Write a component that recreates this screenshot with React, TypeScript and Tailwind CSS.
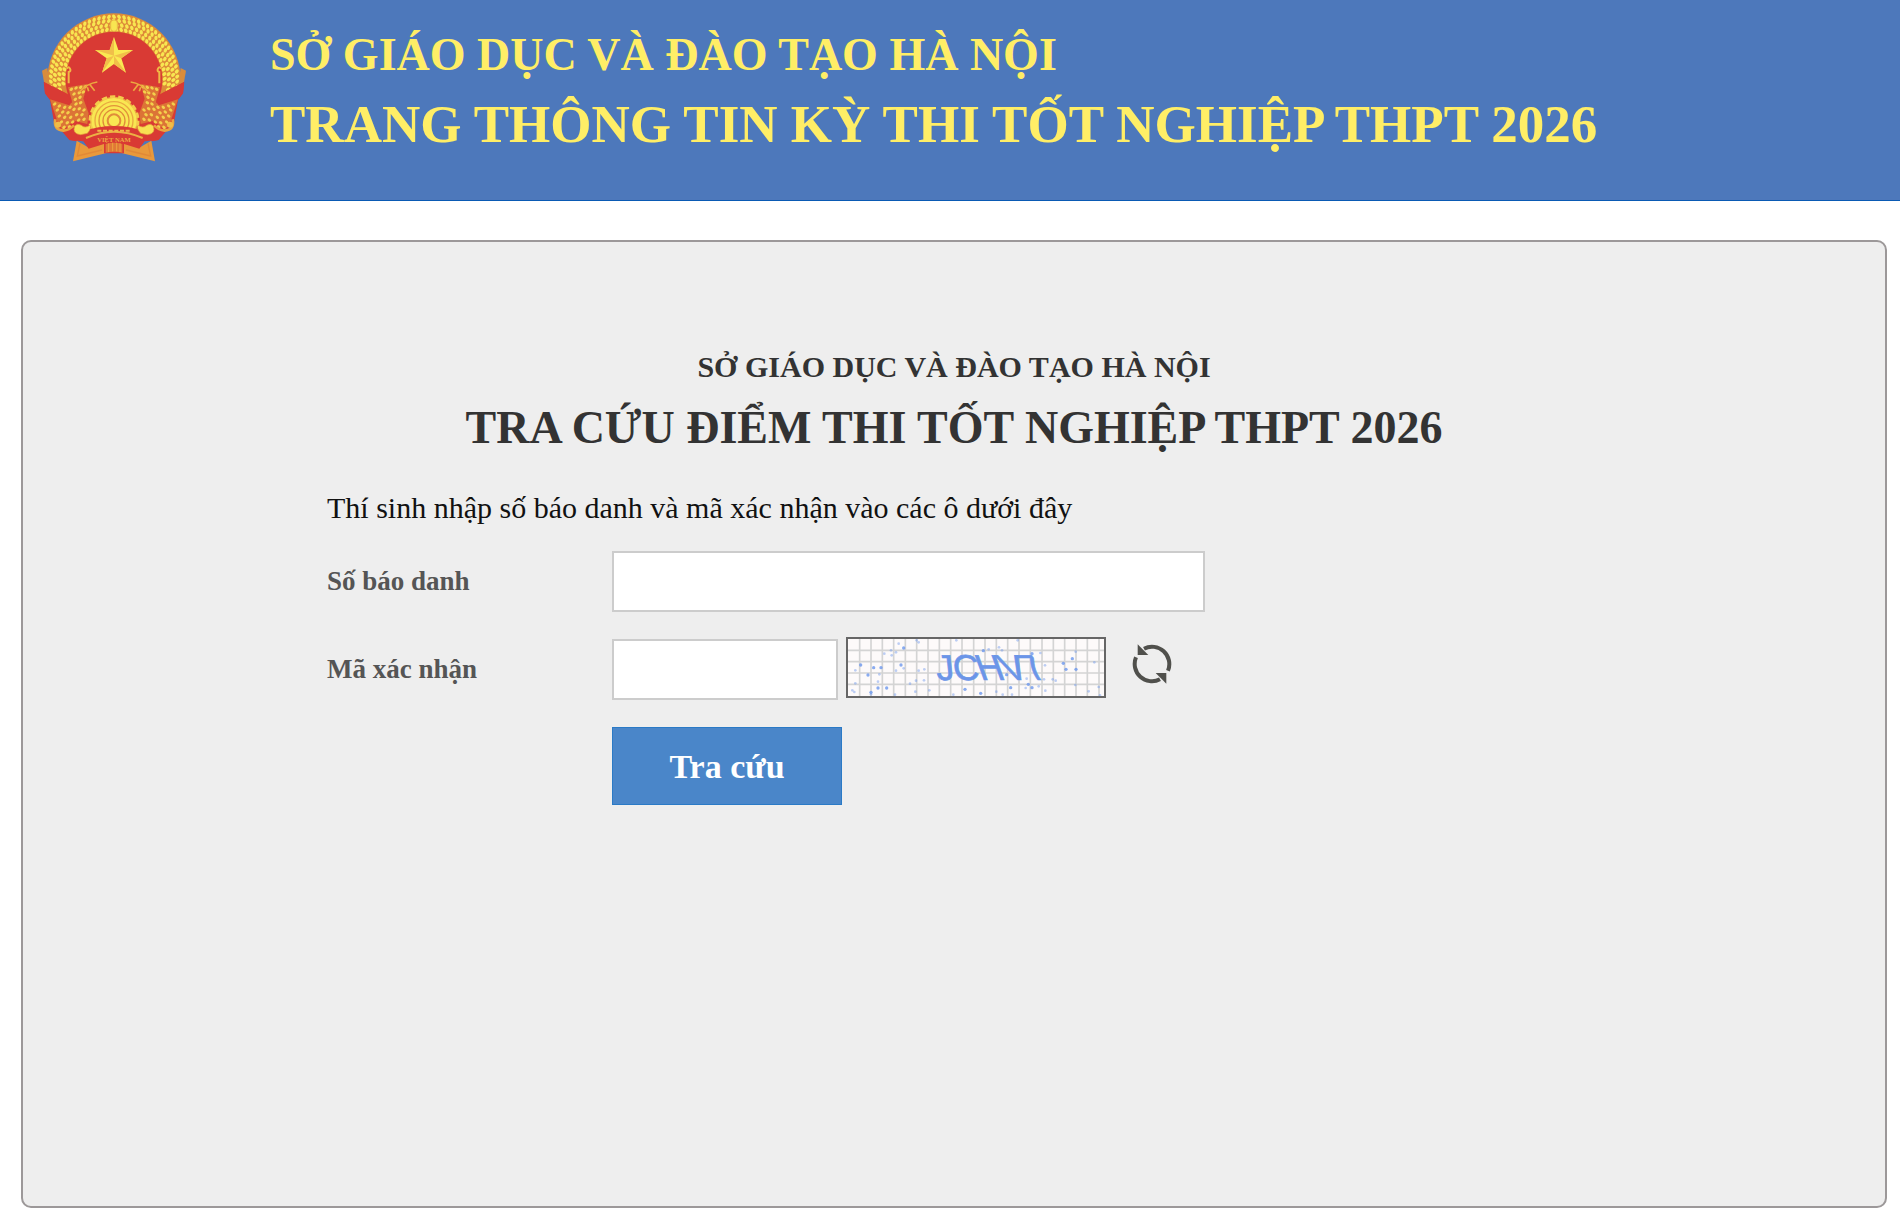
import { useState } from 'react';

type Point = { x: number; y: number; a: number };

function ring(radius: number, count: number, from: number, to: number): Point[] {
  return Array.from({ length: count }, (_, i) => {
    const a = from + ((to - from) * i) / (count - 1);
    const t = (a * Math.PI) / 180;
    return { x: 342 + radius * Math.sin(t), y: 240 - radius * Math.cos(t), a };
  });
}

const GRAINS: Point[] = [
  ...ring(152, 36, -94, 94),
  ...ring(165, 38, -100, 100),
  ...ring(178, 41, -100, 100),
  ...ring(190, 43, -96, 96),
];

const SHEAF: [number, number][] = [
  [214, 268], [228, 264], [242, 262], [256, 260], [222, 282], [238, 278], [250, 276],
  [226, 298], [240, 292], [164, 312], [178, 318], [194, 322], [210, 322], [228, 312],
  [242, 308], [172, 330], [188, 336], [204, 338], [222, 328], [238, 326], [252, 330],
  [178, 348], [194, 352], [212, 352], [230, 344], [246, 344], [184, 366], [202, 368],
  [218, 366], [236, 360], [252, 358], [192, 382], [208, 380],
];

function EmblemSide() {
  return (
    <g>
      <path d="M126 212 L142 204 L150 262 L132 246 Z" fill="#d98c3c" />
      <path d="M132 246 L214 288 L262 290 L262 396 L228 424 L208 420 L162 366 L150 300 L135 280 Z" fill="#d93a34" />
      <path d="M150 298 L208 316 L216 304 L204 262 L262 252 L250 296 L266 340 L262 372 L222 362 L190 390 L176 376 Z" fill="#dc7436" />
      <path d="M131 246 L198 280 L216 308 L204 313 L146 294 L135 280 Z" fill="#d93a34" />
      {SHEAF.map(([x, y]) => (
        <ellipse key={`${x}-${y}`} cx={x} cy={y} rx="6" ry="4.2" fill="#f3d04c" transform={`rotate(-40 ${x} ${y})`} />
      ))}
      <path d="M292 246 Q262 250 238 276 M270 254 L284 272 M262 262 L266 274" stroke="#ecaa40" strokeWidth="5" fill="none" />
      <path d="M200 206 q6 -8 10 0 q4 8 -4 10 l0 34" stroke="#f0b945" strokeWidth="6" fill="none" />
      <path d="M166 358 Q160 390 190 392 Q208 390 222 376" stroke="#eba53f" strokeWidth="8" fill="none" />
      <circle cx="174" cy="374" r="9" fill="#f1bd48" />
      <path d="M230 422 L219 484 L317 460 L317 428 L264 442 Z" fill="#e9993b" />
      <path d="M240 430 L232 468 L306 450" stroke="#dc7e35" strokeWidth="4" fill="none" opacity=".6" />
    </g>
  );
}

function Curl() {
  return (
    <path
      d="M224 378 Q216 402 242 404 L262 400 Q276 384 270 376 Q254 386 244 376 Q232 368 224 378Z"
      fill="#f8e152"
      stroke="#e39a3a"
      strokeWidth="2"
    />
  );
}

function Emblem() {
  return (
    <svg viewBox="126 39 432 447" className="h-[149px] w-36 shrink-0" role="img" aria-label="Quốc huy Việt Nam">
      <circle cx="342" cy="240" r="200" fill="#dd8a38" />
      {GRAINS.map((g) => (
        <ellipse
          key={`${g.x}-${g.y}`}
          cx={g.x}
          cy={g.y}
          rx="5"
          ry="7"
          fill="#f8e651"
          transform={`rotate(${g.a + (g.a < 0 ? 38 : -38)} ${g.x} ${g.y})`}
        />
      ))}
      <circle cx="342" cy="240" r="145" fill="#d93a34" />
      <rect x="332" y="60" width="20" height="34" rx="9" fill="#f8e651" stroke="#e9b544" strokeWidth="3" />
      <path d="M230 300 H454 V410 H230 Z" fill="#d93a34" />
      <EmblemSide />
      <g transform="matrix(-1 0 0 1 684 0)">
        <EmblemSide />
      </g>
      <path d="M342 111 L355 150 L399 150 L364 175 L378 218 L342 192 L306 218 L320 175 L285 150 L329 150 Z" fill="#fae952" />
      <path d="M342 111 L342 167 L329 150Z M399 150 L342 167 L364 175Z M378 218 L342 167 L342 192Z M306 218 L342 167 L320 175Z M285 150 L342 167 L329 150Z" fill="#f1bf49" />
      <circle cx="342" cy="362" r="72" fill="#e9a83f" stroke="#f3cb4b" strokeWidth="9" strokeDasharray="16 9" />
      <circle cx="342" cy="362" r="68" fill="#f9e752" />
      <circle cx="342" cy="362" r="57" fill="none" stroke="#e9aa40" strokeWidth="4" />
      <circle cx="342" cy="362" r="45" fill="none" stroke="#e2923a" strokeWidth="4" />
      <circle cx="342" cy="362" r="33" fill="none" stroke="#e08c3a" strokeWidth="4" />
      <circle cx="342" cy="362" r="19" fill="none" stroke="#e08c3a" strokeWidth="6" />
      <path d="M208 420 L250 394 Q342 362 434 394 L476 420 L434 424 L418 446 L372 432 L372 460 L312 460 L312 432 L266 446 L250 424 Z" fill="#d93a34" />
      <Curl />
      <g transform="matrix(-1 0 0 1 684 0)">
        <Curl />
      </g>
      <path d="M258 414 Q342 376 428 414" fill="none" stroke="#ecb044" strokeWidth="6" />
      <path d="M292 392 H392" stroke="#efbb46" strokeWidth="6" strokeDasharray="12 5" />
      <path d="M317 432 Q342 424 367 432 L367 458 Q342 452 317 458Z" fill="#e07836" />
      <path d="M326 430 V456 M338 428 V454 M350 428 V454 M360 430 V456" stroke="#eda23e" strokeWidth="3" />
      <text x="342" y="425" textAnchor="middle" fontSize="20" fontWeight="700" fill="#ecaa42" className="font-['Liberation_Serif',serif]">
        VIỆT NAM
      </text>
    </svg>
  );
}

const DOTS: [number, number, number][] = [
  [176, 41, 3], [191, 54, 4], [230, 31, 3], [236, 37, 3], [349, 31, 3], [533, 31, 3], [153, 61, 3], [168, 67, 3],
  [133, 71, 3], [155, 76, 3], [62, 105, 4], [46, 121, 3], [84, 135, 4], [101, 113, 4], [123, 113, 4], [118, 133, 3],
  [183, 105, 4], [191, 115, 3], [168, 122, 3], [236, 122, 3], [253, 118, 3], [228, 152, 3], [252, 151, 3], [210, 161, 3],
  [114, 155, 3], [46, 160, 3], [114, 174, 4], [140, 174, 4], [37, 181, 3], [43, 186, 3], [93, 187, 4], [93, 193, 3],
  [165, 194, 3], [226, 185, 3], [268, 181, 3], [340, 194, 3], [375, 178, 4], [422, 190, 4], [469, 185, 3], [488, 194, 3],
  [512, 173, 4], [516, 194, 3], [430, 62, 4], [446, 58, 3], [477, 52, 3], [486, 61, 3], [576, 71, 4], [601, 69, 3],
  [615, 106, 3], [500, 134, 4], [560, 146, 3], [565, 163, 4], [557, 174, 3], [576, 173, 4], [596, 169, 3], [612, 148, 3],
  [616, 182, 3], [638, 148, 3], [647, 152, 3], [697, 86, 4], [670, 100, 4], [678, 118, 4], [708, 118, 4], [707, 65, 3],
  [763, 97, 3], [706, 165, 3], [746, 184, 3], [776, 171, 3], [780, 196, 3],
];

const LETTERS: { char: string; x: number; skew: number }[] = [
  { char: 'J', x: 292, skew: 6 },
  { char: 'C', x: 343, skew: 6 },
  { char: 'H', x: 423, skew: 20 },
  { char: 'V', x: 502, skew: 28 },
  { char: '7', x: 574, skew: 36 },
];

function Captcha() {
  return (
    <svg viewBox="24 27 768 171" className="block size-full" role="img" aria-label="JCHV7">
      <path
        d="M59 27V198M93 27V198M127 27V198M161 27V198M196 27V198M230 27V198M264 27V198M298 27V198M332 27V198M366 27V198M401 27V198M435 27V198M469 27V198M503 27V198M537 27V198M571 27V198M606 27V198M640 27V198M674 27V198M708 27V198M742 27V198M777 27V198M24 61H792M24 95H792M24 129H792M24 163H792"
        stroke="#d4d4d4"
        strokeWidth="5"
      />
      {DOTS.map(([x, y, r]) => (
        <circle key={`${x}-${y}`} cx={x} cy={y} r={r + 1} fill="#6c97ee" opacity={r === 4 ? 0.8 : 0.45} />
      ))}
      <g fill="#6b95e8" stroke="#6b95e8" strokeWidth="2" fontSize="108" className="font-['Liberation_Sans',sans-serif]">
        {LETTERS.map((l) => (
          <text key={l.char} transform={`translate(${l.x} 150) skewX(${l.skew})`}>
            {l.char}
          </text>
        ))}
      </g>
    </svg>
  );
}

function RefreshIcon() {
  return (
    <svg viewBox="51 37 118 120" className="size-10" aria-hidden="true">
      <path d="M86 51 A52 52 0 0 1 158 117" fill="none" stroke="#50504c" strokeWidth="12" />
      <path d="M67 38 V70 H99 Z" fill="#50504c" />
      <path d="M134 143 A52 52 0 0 1 62 77" fill="none" stroke="#50504c" strokeWidth="12" />
      <path d="M153 156 V124 H121 Z" fill="#50504c" />
    </svg>
  );
}

export default function App() {
  const [candidate, setCandidate] = useState('');
  const [code, setCode] = useState('');

  return (
    <div className="bg-white pb-3 font-['Liberation_Serif','Times_New_Roman',serif] text-[#333]">
      <header className="flex items-start border-b border-[#0a5ab4] bg-[#4d78bb] pt-[13px] pr-6 pb-[38px] pl-[42px]">
        <Emblem />
        <div className="ml-[84px] pt-2 font-bold text-[#ffee66]">
          <p className="text-[46px] leading-[68px]">SỞ GIÁO DỤC VÀ ĐÀO TẠO HÀ NỘI</p>
          <p className="text-[53px] leading-[70px]">TRANG THÔNG TIN KỲ THI TỐT NGHIỆP THPT 2026</p>
        </div>
      </header>

      <main className="mt-[39px] mr-[13px] ml-[21px] min-h-[968px] rounded-[10px] border-2 border-[#9c9899] bg-[#eeeeee] px-8 pt-[98px]">
        <div className="text-center font-bold">
          <h2 className="text-[30px] leading-[54px]">SỞ GIÁO DỤC VÀ ĐÀO TẠO HÀ NỘI</h2>
          <h1 className="text-[46px] leading-[68px]">TRA CỨU ĐIỂM THI TỐT NGHIỆP THPT 2026</h1>
        </div>

        <form className="mx-auto mt-[19px] max-w-[1254px]" onSubmit={(e) => e.preventDefault()}>
          <p className="text-[30px] leading-[54px] text-[#111]">
            Thí sinh nhập số báo danh và mã xác nhận vào các ô dưới đây
          </p>

          <div className="mt-4 flex items-center">
            <label htmlFor="candidate" className="w-[285px] text-[27px] font-bold text-[#555]">
              Số báo danh
            </label>
            <input
              id="candidate"
              type="text"
              value={candidate}
              onChange={(e) => setCandidate(e.target.value)}
              className="h-[61px] w-[593px] border-2 border-[#ccc] bg-white px-3 text-[27px]"
            />
          </div>

          <div className="mt-[25px] flex items-center">
            <label htmlFor="code" className="w-[285px] text-[27px] font-bold text-[#555]">
              Mã xác nhận
            </label>
            <input
              id="code"
              type="text"
              value={code}
              onChange={(e) => setCode(e.target.value)}
              className="h-[61px] w-[226px] border-2 border-[#ccc] bg-white px-3 text-[27px]"
            />
            <div className="mb-1 ml-2 h-[61px] w-[260px] border-2 border-[#666] bg-[#fdfafa]">
              <Captcha />
            </div>
            <button type="button" aria-label="Đổi mã xác nhận" className="mb-3 ml-[26px]">
              <RefreshIcon />
            </button>
          </div>

          <button type="submit" className="mt-[25px] ml-[285px] h-[78px] w-[230px] border border-[#2a7ac6] bg-[#4a86c9] text-[34px] font-bold text-white">
            Tra cứu
          </button>
        </form>
      </main>
    </div>
  );
}
